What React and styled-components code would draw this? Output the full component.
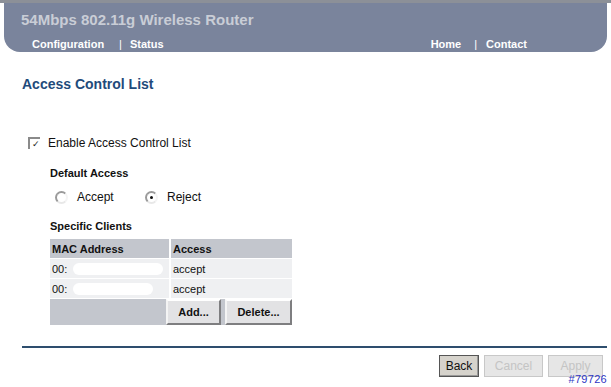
import styled, { createGlobalStyle } from 'styled-components'

const GlobalStyle = createGlobalStyle`
  html, body {
    margin: 0;
    padding: 0;
    background: #ffffff;
    font-family: 'Liberation Sans', Arial, sans-serif;
    color: #111;
  }
`

const Page = styled.div`
  width: 611px;
  height: 387px;
  overflow: hidden;
  border-top: 3px solid #8c9098;
  box-sizing: border-box;
`

const Header = styled.div`
  margin: 0 4px;
  height: 49px;
  background: #7a849c;
  border-radius: 0 0 16px 16px;
  display: flex;
  flex-direction: column;
`

const Title = styled.div`
  padding: 8px 0 0 17px;
  height: 24px;
  font-size: 15px;
  font-weight: bold;
  color: #c9cdd6;
`

const Nav = styled.div`
  display: flex;
  justify-content: space-between;
  padding: 3px 0 0 28px;
  width: 495px;
`

const NavGroup = styled.div`
  display: flex;
  align-items: center;
  font-size: 11px;
  font-weight: bold;
  color: #ffffff;
`

const Sep = styled.span`
  font-weight: normal;
  margin: 0 ${p => p.$right}px 0 ${p => p.$left}px;
`

const Content = styled.div`
  padding: 0 0 0 22px;
`

const Heading = styled.h1`
  margin: 24px 0 0;
  font-size: 14px;
  font-weight: bold;
  color: #1f4b7b;
`

const CheckRow = styled.label`
  display: flex;
  align-items: center;
  margin: 44px 0 0 6px;
  font-size: 12px;
`

const Check = styled.span`
  width: 10px;
  height: 10px;
  border-top: 2px solid #8a8a8a;
  border-left: 2px solid #8a8a8a;
  margin-right: 8px;
  font-size: 9px;
  line-height: 11px;
  text-align: right;
  color: #222;
`

const Section = styled.div`
  margin-left: 28px;
`

const Label = styled.div`
  margin-top: ${p => p.$top}px;
  font-size: 11px;
  font-weight: bold;
`

const RadioRow = styled.div`
  display: flex;
  margin: 11px 0 0 5px;
  font-size: 12px;
`

const RadioOpt = styled.label`
  display: flex;
  align-items: center;
  width: ${p => p.$w}px;
`

const Radio = styled.span`
  width: 9px;
  height: 9px;
  border-radius: 50%;
  border: 2px solid #9a9a9a;
  border-right-color: #f4f4f4;
  border-bottom-color: #e8e8e8;
  margin-right: 9px;
  display: flex;
  align-items: center;
  justify-content: center;
  &::after {
    content: '';
    width: 3px;
    height: 3px;
    border-radius: 50%;
    background: ${p => (p.$on ? '#111' : 'transparent')};
  }
`

const Table = styled.div`
  margin-top: 7px;
  width: 242px;
  display: grid;
  grid-template-columns: 119px 121px;
  column-gap: 2px;
  row-gap: 1px;
  font-size: 11px;
`

const Cell = styled.div`
  height: 19px;
  padding-left: 2px;
  display: flex;
  align-items: center;
  background: ${p => (p.$head ? '#c3c6cd' : '#eff0f2')};
  font-weight: ${p => (p.$head ? 'bold' : 'normal')};
`

const Blur = styled.span`
  display: inline-block;
  width: ${p => p.$w}px;
  height: 12px;
  margin-left: 6px;
  border-radius: 6px;
  background: #ffffff;
`

const ActionRow = styled.div`
  grid-column: 1 / 3;
  height: 26px;
  background: #c3c6cd;
  display: flex;
  justify-content: flex-end;
  gap: 4px;
`

const TableButton = styled.button`
  font-family: inherit;
  font-size: 11px;
  font-weight: bold;
  width: ${p => p.$w}px;
  height: 26px;
  background: #e2e2e4;
  border: 2px solid;
  border-color: #ffffff #7e7e80 #7e7e80 #f4f4f4;
  padding: 0;
  color: #111;
`

const Rule = styled.div`
  margin: 21px 4px 0 0;
  height: 2px;
  background: #2e4e6e;
`

const Footer = styled.div`
  display: flex;
  justify-content: flex-end;
  gap: 5px;
  margin: 7px 8px 0 0;
  position: relative;
`

const FootButton = styled.button`
  font-family: inherit;
  font-size: 12px;
  height: 22px;
  width: ${p => p.$w}px;
  padding: 0;
  background: ${p => (p.disabled ? '#e6e6e6' : '#d6d3cc')};
  color: ${p => (p.disabled ? '#c4c4c4' : '#111')};
  border: 1px solid ${p => (p.disabled ? '#c8c8c8' : '#555')};
  box-shadow: ${p => (p.disabled ? 'none' : 'inset -1px -1px 0 #999')};
`

const Tag = styled.span`
  position: absolute;
  right: -4px;
  top: 18px;
  font-size: 11px;
  line-height: 12px;
  color: #2b35c4;
  letter-spacing: 0.3px;
`

export default function App() {
  return (
    <Page>
      <GlobalStyle />
      <Header>
        <Title>54Mbps 802.11g Wireless Router</Title>
        <Nav>
          <NavGroup>
            Configuration<Sep $left={15} $right={8}>|</Sep>Status
          </NavGroup>
          <NavGroup>
            Home<Sep $left={13} $right={9}>|</Sep>Contact
          </NavGroup>
        </Nav>
      </Header>
      <Content>
        <Heading>Access Control List</Heading>
        <CheckRow>
          <Check>✓</Check>Enable Access Control List
        </CheckRow>
        <Section>
          <Label $top={17}>Default Access</Label>
          <RadioRow>
            <RadioOpt $w={90}>
              <Radio />Accept
            </RadioOpt>
            <RadioOpt $w={90}>
              <Radio $on />Reject
            </RadioOpt>
          </RadioRow>
          <Label $top={16}>Specific Clients</Label>
          <Table>
            <Cell $head>MAC Address</Cell>
            <Cell $head>Access</Cell>
            <Cell>00:<Blur $w={90} /></Cell>
            <Cell>accept</Cell>
            <Cell>00:<Blur $w={80} /></Cell>
            <Cell>accept</Cell>
            <ActionRow>
              <TableButton $w={55}>Add...</TableButton>
              <TableButton $w={67}>Delete...</TableButton>
            </ActionRow>
          </Table>
        </Section>
        <Rule />
        <Footer>
          <FootButton $w={40}>Back</FootButton>
          <FootButton $w={59} disabled>Cancel</FootButton>
          <FootButton $w={55} disabled>Apply</FootButton>
          <Tag>#79726</Tag>
        </Footer>
      </Content>
    </Page>
  )
}
